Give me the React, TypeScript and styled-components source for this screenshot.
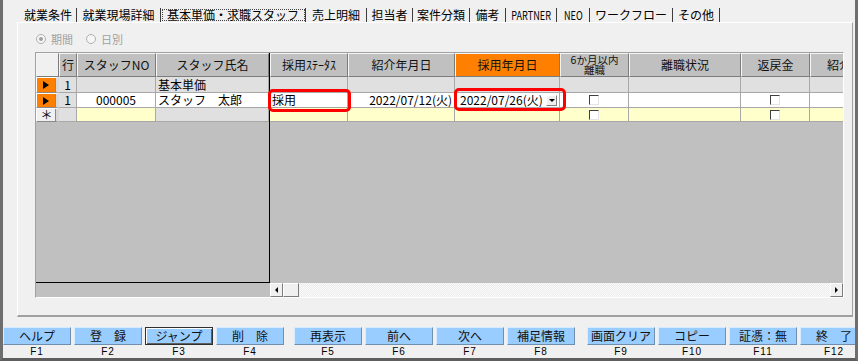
import React from 'react';
import styled, { createGlobalStyle, css } from 'styled-components';

const GlobalStyle = createGlobalStyle`
  html, body {
    margin: 0;
    padding: 0;
    background: #f0f0f0;
  }
  body {
    font-family: "Noto Sans CJK JP", "Noto Sans", sans-serif;
    font-size: 12px;
    color: #000;
  }
  * {
    box-sizing: border-box;
  }
`;

const Window = styled.div`
  width: 858px;
  height: 361px;
  background: #f0f0f0;
  border-left: 3px solid #6e6e6e;
  border-right: 3px solid #6e6e6e;
  border-bottom: 3px solid #5e5e5e;
  overflow: hidden;
  display: flex;
  flex-direction: column;
`;

const TabStrip = styled.div`
  display: flex;
  align-items: flex-start;
  height: 22px;
  padding: 8px 0 0 17px;
  flex-shrink: 0;
`;

const Tab = styled.div<{ $w: number; $active?: boolean }>`
  display: flex;
  justify-content: center;
  width: ${p => p.$w}px;
  height: 14px;
  line-height: 14px;
  white-space: nowrap;
  border-right: 1px solid #3c3c3c;
  font-size: 12px;
  ${p =>
    p.$active &&
    css`
      outline: 1px dotted #444;
      outline-offset: -2px;
    `}
`;

const NarrowText = styled.span`
  display: inline-block;
  font-size: 12px;
  transform: scaleX(0.76);
`;

const Panel = styled.div`
  margin-left: 14px;
  width: 836px;
  height: 295px;
  flex-shrink: 0;
  border-top: 1px solid #fff;
  border-left: 1px solid #fff;
  border-right: 1px solid #a0a0a0;
  border-bottom: 2px solid #a0a0a0;
  padding: 10px 0 0 17px;
`;

const RadioRow = styled.div`
  display: flex;
  align-items: center;
  height: 12px;
  color: #a0a0a0;
  font-size: 11px;
  line-height: 12px;
`;

const Radio = styled.span<{ $checked?: boolean; $first?: boolean }>`
  position: relative;
  width: 10px;
  height: 10px;
  border-radius: 50%;
  border: 1px solid #b0b0b0;
  background: #f6f6f6;
  margin: 0 5px 0 ${p => (p.$first ? 1 : 13)}px;
  ${p =>
    p.$checked &&
    css`
      &::after {
        content: '';
        position: absolute;
        left: 2px;
        top: 2px;
        width: 4px;
        height: 4px;
        border-radius: 50%;
        background: #a0a0a0;
      }
    `}
`;

const Grid = styled.div`
  position: relative;
  margin-top: 7px;
  width: 809px;
  height: 246px;
  border: 1px solid;
  border-color: #a0a0a0 #fff #fff #a0a0a0;
  background: #c0c0c0;
  display: flex;
  flex-direction: column;
`;

const GridBody = styled.div`
  display: flex;
  height: 230px;
`;

const FrozenPane = styled.div`
  width: 234px;
  flex-shrink: 0;
  border-right: 1px solid #000;
  border-bottom: 1px solid #000;
`;

const ScrollPane = styled.div`
  flex: 1;
  overflow: hidden;
`;

const Row = styled.div<{ $cols: string; $h: number }>`
  display: grid;
  grid-template-columns: ${p => p.$cols};
  height: ${p => p.$h}px;
`;

const HeadCell = styled.div<{ $accent?: boolean; $small?: boolean; $corner?: boolean }>`
  display: flex;
  align-items: center;
  justify-content: center;
  text-align: center;
  white-space: pre-line;
  background: ${p => (p.$accent ? '#ff8000' : p.$corner ? '#f0f0f0' : '#c0c0c0')};
  border-top: 1px solid #f6f6f6;
  border-left: 1px solid #f6f6f6;
  border-right: 1px solid #7c7c7c;
  border-bottom: 1px solid #7c7c7c;
  font-size: ${p => (p.$small ? 10.5 : 12)}px;
  line-height: ${p => (p.$small ? '10px' : '14px')};
  color: #111;
`;

type Align = 'left' | 'center' | 'right';

const justify = (a?: Align) => (a === 'center' ? 'center' : a === 'right' ? 'flex-end' : 'flex-start');

const Cell = styled.div<{ $bg: string; $align?: Align }>`
  display: flex;
  align-items: center;
  justify-content: ${p => justify(p.$align)};
  padding: 0 2px;
  background: ${p => p.$bg};
  border-right: 1px solid #a8a8a8;
  border-bottom: 1px solid #a8a8a8;
  white-space: nowrap;
  line-height: 14px;
`;

const RowHead = styled.div<{ $current?: boolean }>`
  display: flex;
  align-items: center;
  justify-content: center;
  background: ${p => (p.$current ? '#ff8000' : '#f0f0f0')};
  border-top: 1px solid #fff;
  border-left: 1px solid #fff;
  border-right: 3px solid #d8d8d8;
  border-bottom: 1px solid #8a8a8a;
  box-shadow: inset -1px 0 0 #8a8a8a;
  font-size: 12px;
  line-height: 12px;
`;

const Pointer = styled.span`
  width: 0;
  height: 0;
  margin-right: 2px;
  border-left: 6px solid #000;
  border-top: 4.5px solid transparent;
  border-bottom: 4.5px solid transparent;
`;

const CheckBox = styled.span`
  width: 10px;
  height: 10px;
  background: #fff;
  border: 1px solid;
  border-color: #404040 #e4e4e4 #e4e4e4 #404040;
`;

const DropValue = styled.span`
  flex: 1;
  padding-left: 3px;
`;

const DropButton = styled.span`
  display: flex;
  align-items: center;
  justify-content: center;
  width: 11px;
  height: 11px;
  background: #f0f0f0;
  border: 1px solid;
  border-color: #fff #808080 #808080 #fff;
  &::after {
    content: '';
    border-top: 3px solid #000;
    border-left: 3px solid transparent;
    border-right: 3px solid transparent;
  }
`;

const Highlight = styled.div<{ $x: number; $y: number; $w: number; $h: number }>`
  position: absolute;
  left: ${p => p.$x}px;
  top: ${p => p.$y}px;
  width: ${p => p.$w}px;
  height: ${p => p.$h}px;
  border: 3px solid #ff0000;
  border-radius: 5px;
  pointer-events: none;
`;

const ScrollRow = styled.div`
  display: flex;
  height: 14px;
`;

const ScrollSpacer = styled.div`
  width: 234px;
  flex-shrink: 0;
  background: #c0c0c0;
`;

const ScrollButton = styled.div<{ $dir: 'left' | 'right' }>`
  display: flex;
  align-items: center;
  justify-content: center;
  width: 13px;
  flex-shrink: 0;
  background: #f0f0f0;
  border: 1px solid;
  border-color: #fff #7c7c7c #7c7c7c #fff;
  &::after {
    content: '';
    border-top: 3px solid transparent;
    border-bottom: 3px solid transparent;
    ${p => (p.$dir === 'left' ? 'border-right: 3px solid #000;' : 'border-left: 3px solid #000;')}
  }
`;

const ScrollThumb = styled.div`
  width: 16px;
  flex-shrink: 0;
  background: #f0f0f0;
  border: 1px solid;
  border-color: #fff #7c7c7c #7c7c7c #fff;
`;

const ScrollTrack = styled.div`
  flex: 1;
  background-color: #fff;
  background-image: repeating-conic-gradient(#ececec 0 25%, #fbfbfb 0 50%);
  background-size: 2px 2px;
`;

const Footer = styled.div`
  display: flex;
  padding-top: 10px;
`;

const KeyGroup = styled.div<{ $offset: number }>`
  display: flex;
  gap: 3px;
  flex-shrink: 0;
  margin-left: ${p => p.$offset}px;
`;

const Key = styled.div`
  display: flex;
  flex-direction: column;
  align-items: center;
  width: 68px;
  flex-shrink: 0;
`;

const KeyButton = styled.div<{ $focused?: boolean }>`
  display: flex;
  align-items: center;
  justify-content: center;
  width: 68px;
  height: 18px;
  background: #99ccff;
  border: 1px solid;
  border-color: #d6ebff #6f8fae #6f8fae #d6ebff;
  font-size: 12px;
  line-height: 14px;
  color: #111;
  white-space: nowrap;
  ${p =>
    p.$focused &&
    css`
      border: 1px solid #303030;
      box-shadow: inset 1px 1px 0 #fff, inset -1px -1px 0 #5f5f5f;
    `}
`;

const KeyLabel = styled.span`
  margin-top: 2px;
  height: 10px;
  font-family: "Liberation Sans", sans-serif;
  font-size: 10px;
  line-height: 10px;
  letter-spacing: 1px;
`;

const tabs = [
  { label: '就業条件', w: 57 },
  { label: '就業現場詳細', w: 84 },
  { label: '基本単価・求職スタッフ', w: 145, active: true },
  { label: '売上明細', w: 61 },
  { label: '担当者', w: 46 },
  { label: '案件分類', w: 57 },
  { label: '備考', w: 36 },
  { label: 'PARTNER', w: 51, narrow: true },
  { label: 'NEO', w: 33, narrow: true },
  { label: 'ワークフロー', w: 83 },
  { label: 'その他', w: 47 },
];

const keyGroups = [
  {
    offset: 0,
    keys: [
      { label: 'ヘルプ', fn: 'F1' },
      { label: '登　録', fn: 'F2' },
      { label: 'ジャンプ', fn: 'F3', focused: true },
      { label: '削　除', fn: 'F4' },
    ],
  },
  {
    offset: 10,
    keys: [
      { label: '再表示', fn: 'F5' },
      { label: '前へ', fn: 'F6' },
      { label: '次へ', fn: 'F7' },
      { label: '補足情報', fn: 'F8' },
    ],
  },
  {
    offset: 12,
    keys: [
      { label: '画面クリア', fn: 'F9' },
      { label: 'コピー', fn: 'F10' },
      { label: '証憑：無', fn: 'F11' },
      { label: '終　了', fn: 'F12' },
    ],
  },
];

const FROZEN_COLS = '23px 18px 79px 113px';
const SCROLL_COLS = '78px 107px 105px 69px 112px 69px 70px';
const GRAY = '#e0e0e0';
const WHITE = '#ffffff';
const YELLOW = '#ffffcc';
const ROW_H = [16, 15, 14];

const App = () => {
  return (
    <>
      <GlobalStyle />
      <Window>
        <TabStrip>
          {tabs.map(t => (
            <Tab key={t.label} $w={t.w} $active={t.active}>
              {t.narrow ? <NarrowText>{t.label}</NarrowText> : t.label}
            </Tab>
          ))}
        </TabStrip>

        <Panel>
          <RadioRow>
            <Radio $first $checked />
            期間
            <Radio />
            日別
          </RadioRow>

          <Grid>
            <GridBody>
              <FrozenPane>
                <Row $cols={FROZEN_COLS} $h={24}>
                  <HeadCell $corner />
                  <HeadCell>行</HeadCell>
                  <HeadCell>スタッフNO</HeadCell>
                  <HeadCell>スタッフ氏名</HeadCell>
                </Row>
                <Row $cols={FROZEN_COLS} $h={ROW_H[0]}>
                  <RowHead $current>
                    <Pointer />
                  </RowHead>
                  <Cell $bg={GRAY} $align="center">1</Cell>
                  <Cell $bg={GRAY} />
                  <Cell $bg={GRAY}>基本単価</Cell>
                </Row>
                <Row $cols={FROZEN_COLS} $h={ROW_H[1]}>
                  <RowHead $current>
                    <Pointer />
                  </RowHead>
                  <Cell $bg={GRAY} $align="center">1</Cell>
                  <Cell $bg={WHITE} $align="center">000005</Cell>
                  <Cell $bg={WHITE}>スタッフ　太郎</Cell>
                </Row>
                <Row $cols={FROZEN_COLS} $h={ROW_H[2]}>
                  <RowHead>＊</RowHead>
                  <Cell $bg={GRAY} />
                  <Cell $bg={YELLOW} />
                  <Cell $bg={GRAY} />
                </Row>
              </FrozenPane>

              <ScrollPane>
                <Row $cols={SCROLL_COLS} $h={24}>
                  <HeadCell>採用ｽﾃｰﾀｽ</HeadCell>
                  <HeadCell>紹介年月日</HeadCell>
                  <HeadCell $accent>採用年月日</HeadCell>
                  <HeadCell $small>{'6か月以内\n離職'}</HeadCell>
                  <HeadCell>離職状況</HeadCell>
                  <HeadCell>返戻金</HeadCell>
                  <HeadCell>紹介料</HeadCell>
                </Row>
                <Row $cols={SCROLL_COLS} $h={ROW_H[0]}>
                  {Array.from({ length: 7 }).map((_, i) => (
                    <Cell key={i} $bg={GRAY} />
                  ))}
                </Row>
                <Row $cols={SCROLL_COLS} $h={ROW_H[1]}>
                  <Cell $bg={WHITE}>採用</Cell>
                  <Cell $bg={WHITE} $align="right">2022/07/12(火)</Cell>
                  <Cell $bg={WHITE}>
                    <DropValue>2022/07/26(火)</DropValue>
                    <DropButton />
                  </Cell>
                  <Cell $bg={WHITE} $align="center">
                    <CheckBox />
                  </Cell>
                  <Cell $bg={WHITE} />
                  <Cell $bg={WHITE} $align="center">
                    <CheckBox />
                  </Cell>
                  <Cell $bg={WHITE} />
                </Row>
                <Row $cols={SCROLL_COLS} $h={ROW_H[2]}>
                  <Cell $bg={YELLOW} />
                  <Cell $bg={YELLOW} />
                  <Cell $bg={YELLOW} />
                  <Cell $bg={YELLOW} $align="center">
                    <CheckBox />
                  </Cell>
                  <Cell $bg={YELLOW} />
                  <Cell $bg={YELLOW} $align="center">
                    <CheckBox />
                  </Cell>
                  <Cell $bg={YELLOW} />
                </Row>
              </ScrollPane>
            </GridBody>

            <ScrollRow>
              <ScrollSpacer />
              <ScrollButton $dir="left" />
              <ScrollThumb />
              <ScrollTrack />
              <ScrollButton $dir="right" />
            </ScrollRow>

            <Highlight $x={232} $y={36} $w={83} $h={23} />
            <Highlight $x={418} $y={35} $w={112} $h={23} />
          </Grid>
        </Panel>

        <Footer>
          {keyGroups.map(g => (
            <KeyGroup key={g.keys[0].fn} $offset={g.offset}>
              {g.keys.map(k => (
                <Key key={k.fn}>
                  <KeyButton $focused={k.focused}>{k.label}</KeyButton>
                  <KeyLabel>{k.fn}</KeyLabel>
                </Key>
              ))}
            </KeyGroup>
          ))}
        </Footer>
      </Window>
    </>
  );
};

export default App;
